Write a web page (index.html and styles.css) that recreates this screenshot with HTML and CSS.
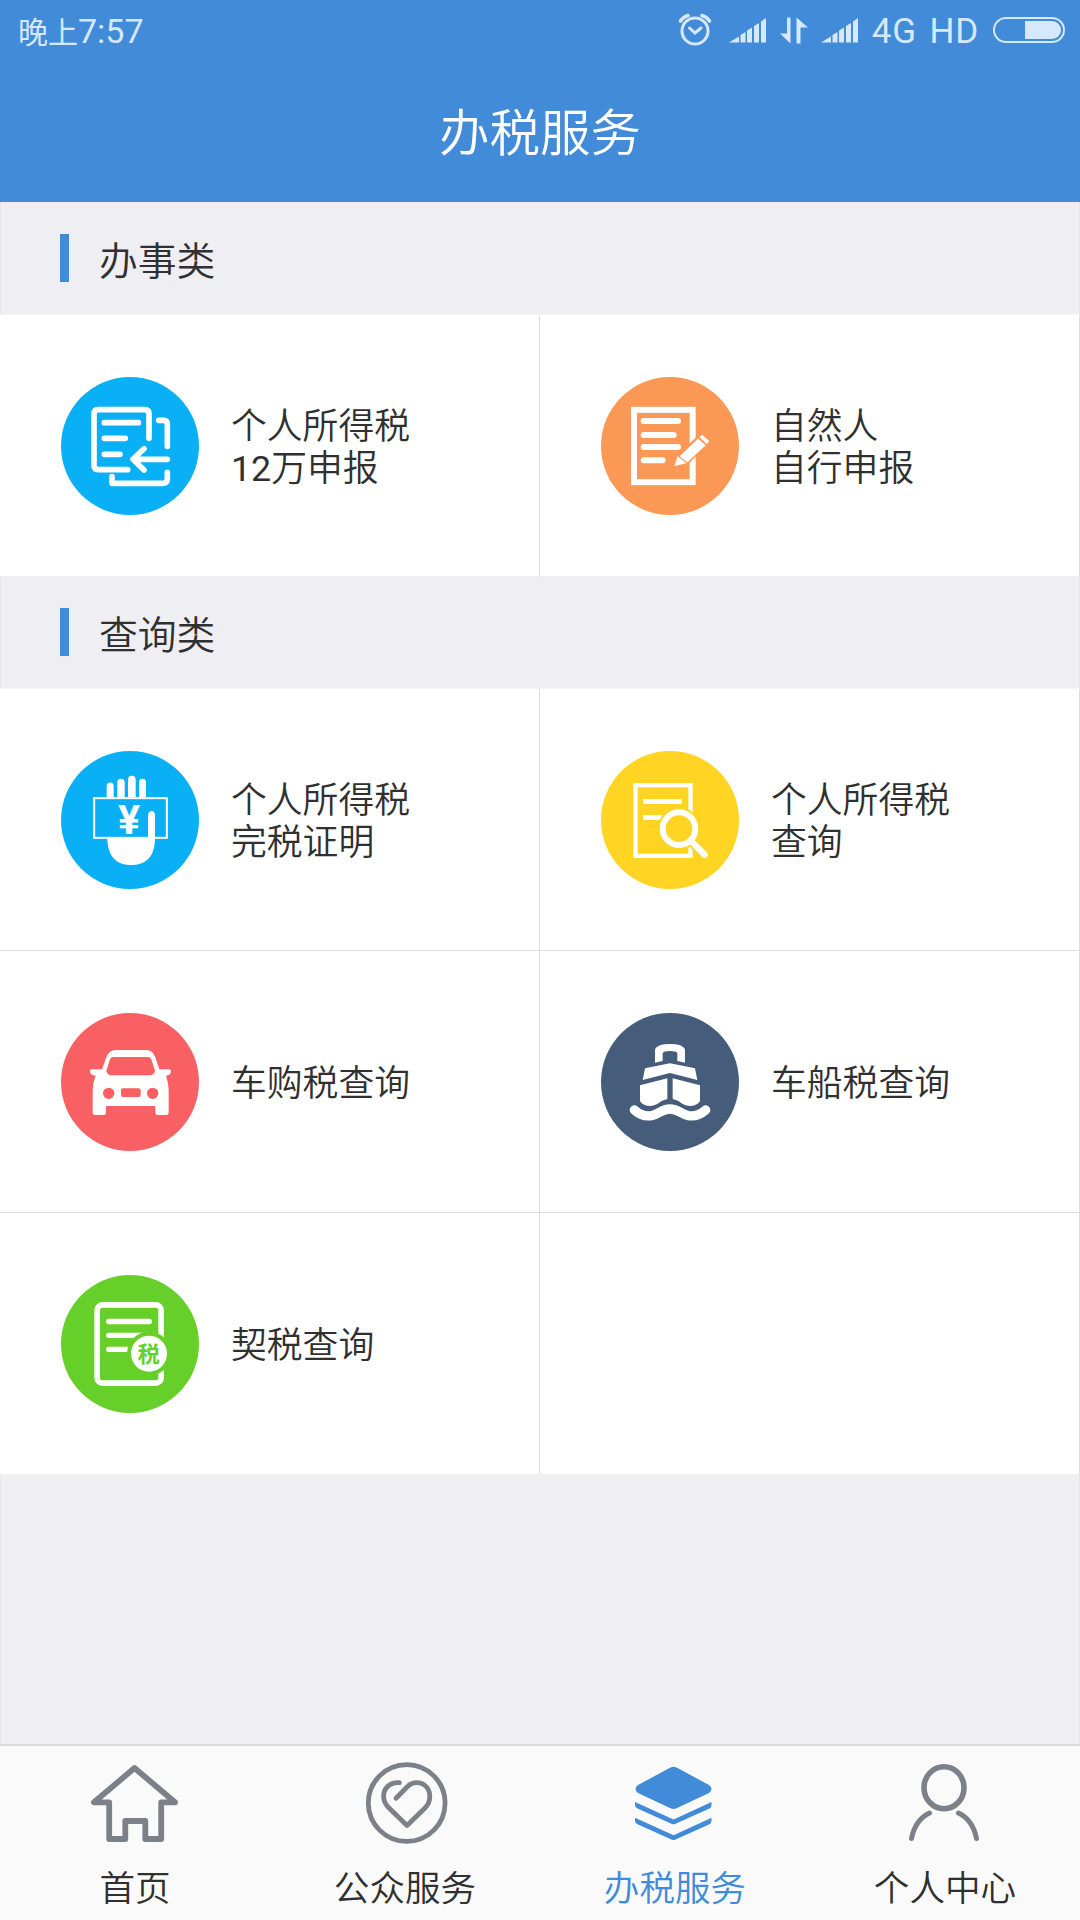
FILE: index.html
```html
<!DOCTYPE html>
<html lang="zh-CN">
<head>
    <meta charset="UTF-8">
    <meta name="viewport" content="width=device-width, initial-scale=1.0">
    <title>办税服务</title>
    <link rel="stylesheet" href="styles.css">
</head>
<body>

    <header class="header">
        <div class="status-bar">
            <div class="time">晚上<span class="digits">7:57</span></div>
            <div class="status-icons">
                <svg class="alarm" width="34" height="34" viewBox="0 0 34 34">
                    <circle cx="17" cy="18" r="13" fill="none" stroke-width="3"/>
                    <path d="M11.5 15 L17 20 L23 15" fill="none" stroke-width="3"/>
                    <path d="M2.500 8 Q5 4 10 2.500 M31.500 8 Q29 4 24 2.500" fill="none" stroke-width="3.600"/>
                </svg>
                <svg class="signal" width="38" height="26" viewBox="0 0 38 26">
                    <path d="M0 25.5 L10 19.5 V25.5 Z M11.5 18 L16.5 15 V25.5 H11.5 Z M18 13.5 L23 10.5 V25.5 H18 Z M25 9 L30 6 V25.5 H25 Z M32 4.5 L37 1 V25.5 H32 Z"/>
                </svg>
                <svg class="transfer" width="28" height="27" viewBox="0 0 28 27">
                    <path d="M7 0.5 H10.5 V26.5 L0 16.5 H7 Z M16.5 0.5 L28 10.5 H20.5 V26.5 H16.5 Z"/>
                </svg>
                <svg class="signal" width="38" height="26" viewBox="0 0 38 26">
                    <path d="M0 25.5 L10 19.5 V25.5 Z M11.5 18 L16.5 15 V25.5 H11.5 Z M18 13.5 L23 10.5 V25.5 H18 Z M25 9 L30 6 V25.5 H25 Z M32 4.5 L37 1 V25.5 H32 Z"/>
                </svg>
                <span class="network">4G HD</span>
                <div class="battery"><div class="battery-level"></div></div>
            </div>
        </div>
        <h1 class="title">办税服务</h1>
    </header>

    <main class="content">
        <h2 class="section-title">办事类</h2>
        <div class="grid">
            <div class="item">
                <svg class="icon blue" viewBox="63 51 414 414">
                    <g fill="none" stroke="#fff" stroke-width="17" stroke-linecap="round" stroke-linejoin="round">
                        <path d="M327 235 V162 Q327 149 314 149 H175 Q162 149 162 162 V316 Q162 329 175 329 H263"/>
                        <path d="M193 188 H295 M193 235 H256 M193 283 H240"/>
                        <path d="M356 181 H371 Q382 181 382 192 V259"/>
                        <path d="M382 298 H280 M312 266 L279 298 L312 330"/>
                        <path d="M216 350 V370 H368 Q382 370 382 356 V337"/>
                    </g>
                </svg>
                <div class="label">个人所得税<br><span class="num">12</span>万申报</div>
            </div>
            <div class="item">
                <svg class="icon orange" viewBox="63 51 414 414">
                    <rect x="162" y="149.5" width="176" height="217" fill="none" stroke="#fff" stroke-width="18"/>
                    <path d="M191 183 H294 M191 225 H281 M191 261 H294 M191 301 H248" stroke="#fff" stroke-width="18" stroke-linecap="round"/>
                    <path d="M280 322 L291 284 L365 217 L395 244 L322 314 Z" fill="#fb9856"/>
                    <path d="M300 289 L354 237 L376 256 L322 306 Z M359 231 L366 225 L387 244 L380 251 Z M293 290 L317 309 L285 317 Z" fill="#fff" stroke="#fff" stroke-width="2" stroke-linejoin="round"/>
                </svg>
                <div class="label">自然人<br>自行申报</div>
            </div>
        </div>

        <h2 class="section-title">查询类</h2>
        <div class="grid">
            <div class="item">
                <svg class="icon blue" viewBox="63 48 414 414">
                    <g fill="#fff">
                        <path d="M200 187 V153 A10.500 10.500 0 0 1 221 153 V187 Z M232 187 V142 A11 11 0 0 1 254 142 V187 Z M264 187 V134 A11.500 11.500 0 0 1 287 134 V187 Z M297 187 V142 A10.500 10.500 0 0 1 318 142 V187 Z"/>
                        <path d="M202 308 H324 V240 Q326 228 335 228 Q344 228 345 240 V318 Q340 390 273 390 Q208 390 202 318 Z"/>
                    </g>
                    <rect x="162.500" y="189.500" width="218" height="119" fill="none" stroke="#fff" stroke-width="6"/>
                    <text class="yen" x="267" y="297" text-anchor="middle">¥</text>
                </svg>
                <div class="label">个人所得税<br>完税证明</div>
            </div>
            <div class="item">
                <svg class="icon yellow" viewBox="63 48 414 414">
                    <rect x="166.500" y="150.500" width="165" height="212" fill="none" stroke="#fff" stroke-width="13"/>
                    <path d="M190 199.500 H306 M190 247.500 H250" stroke="#fff" stroke-width="15"/>
                    <path d="M297 281 L375 361" stroke="#ffd422" stroke-width="30"/>
                    <circle cx="297" cy="281" r="64" fill="#ffd422"/>
                    <circle cx="297" cy="281" r="49" fill="none" stroke="#fff" stroke-width="18"/>
                    <path d="M333 318 L374 359" stroke="#fff" stroke-width="19" stroke-linecap="round"/>
                </svg>
                <div class="label">个人所得税<br>查询</div>
            </div>
            <div class="item">
                <svg class="icon red" viewBox="63 39 414 414">
                    <path fill="#fff" fill-rule="evenodd" d="M186 208 L199 172 Q207 150 228 150 H318 Q338 150 346 172 L358 208 H388 Q393 208 393 214 Q393 226 378 227 Q386 250 386 270 V338 Q386 345 379 345 H353 Q346 345 346 338 V318 H198 V338 Q198 345 191 345 H165 Q158 345 158 338 V270 Q158 250 167 227 Q150 226 150 212 Q150 208 156 208 Z
                        M220 171 Q213 171 210 178 L199 212 Q201 226 218 226 H325 Q342 226 345 212 L334 178 Q331 171 324 171 Z"/>
                    <g fill="#f86063">
                        <circle cx="206" cy="280" r="17"/>
                        <circle cx="338" cy="280" r="17"/>
                        <rect x="243" y="265" width="59" height="26" rx="6"/>
                    </g>
                </svg>
                <div class="label">车购税查询</div>
            </div>
            <div class="item">
                <svg class="icon navy" viewBox="63 39 414 414">
                    <g fill="#fff">
                        <path d="M225 188 V148 Q232 132 270 132 Q308 132 315 148 V188 L292 183 V160 Q290 153 270 153 Q250 153 248 160 V183 Z"/>
                        <path d="M195 205 L270 190 L345 205 L352 240 L270 219 L188 240 Z"/>
                        <path d="M180 256 L262 235 V297 Q245 300 232 312 Q208 325 187 311 L180 304 Z"/>
                        <path d="M360 256 L278 235 V297 Q295 300 308 312 Q332 325 353 311 L360 304 Z"/>
                    </g>
                    <path d="M163 330 C180 345 196 350 215 347 C238 343 244 327 270 327 C296 327 302 343 325 347 C344 350 360 345 377 330" fill="none" stroke="#fff" stroke-width="28" stroke-linecap="round"/>
                </svg>
                <div class="label">车船税查询</div>
            </div>
            <div class="item">
                <svg class="icon green" viewBox="63 45 414 414">
                    <rect x="171.500" y="134.500" width="192" height="235" rx="16" fill="none" stroke="#fff" stroke-width="17"/>
                    <path d="M206 184.500 H328 M206 226 H310 M206 268 H270" stroke="#fff" stroke-width="16" stroke-linecap="round"/>
                    <circle cx="327" cy="281" r="66" fill="#67cf2a"/>
                    <circle cx="327" cy="281" r="54" fill="#fff"/>
                    <text class="badge-text" x="326" y="306" text-anchor="middle">税</text>
                </svg>
                <div class="label">契税查询</div>
            </div>
            <div class="item"></div>
        </div>
    </main>

    <nav class="tab-bar">
        <div class="tab">
            <svg class="tab-icon" viewBox="0 0 90 90">
                <path d="M44.500 8 L4 42.300 H19.200 V79 H35.300 V61 H55.300 V79 H71.200 V42.300 H85 Z" stroke-width="5.800"/>
            </svg>
            <span>首页</span>
        </div>
        <div class="tab">
            <svg class="tab-icon" viewBox="0 0 90 90">
                <circle cx="46.700" cy="43" r="38.400" stroke-width="4.800"/>
                <path d="M39.400 22.700 C30 22 23.600 28 23.600 36.500 C23.600 41 25.500 44.500 29 48 L47 65.500 L65 48 C68.500 44.500 69.800 41 69.800 36.500 C69.800 28 64 22.700 56.500 22.700 C52 22.700 50 24 47.500 26.500 L36 38.300" stroke-width="4.800"/>
            </svg>
            <span>公众服务</span>
        </div>
        <div class="tab active">
            <svg class="tab-icon" viewBox="0 0 90 90">
                <path d="M40.500 7.500 Q43.600 6 46.500 7.500 L79 25 Q84 29 79 33 L46.500 48.300 Q43.600 49.600 40.500 48.300 L8 33 Q3 29 8 25 Z"/>
                <path d="M5 42 L43.600 59.500 L81.500 42 V45 Q81.500 47.500 79.500 48.500 L45 64 Q43.600 64.600 42 64 L7.500 48.500 Q5 47.500 5 45 Z"/>
                <path d="M5 57.700 L43.600 75.200 L81.500 57.700 V60.700 Q81.500 63.200 79.500 64.200 L45 79.700 Q43.600 80.300 42 79.700 L7.500 64.200 Q5 63.200 5 60.700 Z"/>
            </svg>
            <span>办税服务</span>
        </div>
        <div class="tab">
            <svg class="tab-icon" viewBox="0 0 90 90">
                <ellipse cx="44" cy="27.700" rx="20" ry="21" stroke-width="5.600"/>
                <path d="M11.500 78.500 C14 66 20 57.500 29.500 53 M76.500 78.500 C74 66 68 57.500 58.500 53" stroke-width="5"/>
            </svg>
            <span>个人中心</span>
        </div>
    </nav>

</body>
</html>
```

FILE: styles.css
```css
* {
    box-sizing: border-box;
}

body {
    font-family: Roboto, 'Noto Sans CJK SC', sans-serif;
    font-weight: 350;
    display: flex;
    flex-direction: column;
    height: 1920px;
    margin: 0;
    background-color: #eeeef3;
    color: #303030;
}

.header {
    height: 202px;
    background-color: #428bd8;
    color: #ffffff;
}

.status-bar {
    display: flex;
    justify-content: space-between;
    align-items: center;
    height: 60px;
    padding: 0 15px 0 18px;
    color: #d6e8fb;
    font-size: 30px;
    font-weight: 400;
}

.digits {
    font-size: 34px;
}

.num {
    font-weight: 400;
}

.status-icons {
    display: flex;
    align-items: center;
}

.status-icons svg {
    fill: #d6e8fb;
}

.alarm {
    stroke: #d6e8fb;
    stroke-linecap: round;
    margin-right: 17px;
}

.transfer {
    margin: 0 13px;
}

.network {
    padding-top: 2px;
    margin: 0 14px 0 13px;
    font-size: 35px;
    letter-spacing: 0.8px;
    word-spacing: 3px;
}

.battery {
    display: flex;
    justify-content: flex-end;
    width: 72px;
    height: 26px;
    padding: 2px;
    border: 2px solid #d6e8fb;
    border-radius: 13px;
}

.battery-level {
    width: 36px;
    background-color: #d6e8fb;
    border-radius: 0 9px 9px 0;
}

.title {
    margin: 0;
    padding-top: 5px;
    font-size: 50.5px;
    font-weight: 350;
    line-height: 138px;
    text-align: center;
}

.content {
    flex: 1;
    border: solid #e4e4ea;
    border-width: 0 1px;
}

.section-title {
    display: flex;
    align-items: center;
    gap: 30px;
    height: 112px;
    margin: 0;
    padding-left: 59px;
    font-size: 38.8px;
    font-weight: 350;
}

.section-title::before {
    content: '';
    width: 9px;
    height: 48px;
    background-color: #428bd8;
}

.grid {
    display: grid;
    grid-template-columns: 540px 540px;
    grid-auto-rows: 262px;
    margin: 0 -1px -1px;
    border-top: 1px solid #f4f4f7;
}

.item {
    display: flex;
    align-items: center;
    gap: 32px;
    padding-left: 61px;
    background-color: #ffffff;
    border: solid #dddddd;
    border-width: 0 1px 1px 0;
}

.item:nth-last-child(-n+2) {
    border-bottom-color: #eeeef3;
}

.icon {
    width: 138px;
    height: 138px;
    border-radius: 50%;
}

.blue {
    background-color: #0ab0f5;
}

.orange {
    background-color: #fb9856;
}

.yellow {
    background-color: #ffd422;
}

.red {
    background-color: #f86063;
}

.navy {
    background-color: #455d7b;
}

.green {
    background-color: #67cf2a;
}

.yen {
    fill: #ffffff;
    font-size: 124px;
    font-weight: 700;
}

.badge-text {
    fill: #67cf2a;
    font-size: 66px;
    font-weight: 700;
}

.label {
    padding-top: 5px;
    font-size: 35.8px;
    line-height: 42px;
}

.tab-bar {
    display: flex;
    height: 176px;
    background-color: #fafafa;
    border-top: 2px solid #dcdcdc;
}

.tab {
    flex: 1;
    display: flex;
    flex-direction: column;
    align-items: center;
    gap: 8px;
    padding-top: 14px;
    font-size: 35.6px;
    line-height: 62px;
}

.tab-icon {
    flex-shrink: 0;
    width: 90px;
    height: 90px;
    fill: none;
    stroke: #7b8089;
    stroke-linecap: round;
    stroke-linejoin: round;
}

.active {
    color: #428bd8;
}

.active .tab-icon {
    fill: #428bd8;
    stroke: none;
}
```
